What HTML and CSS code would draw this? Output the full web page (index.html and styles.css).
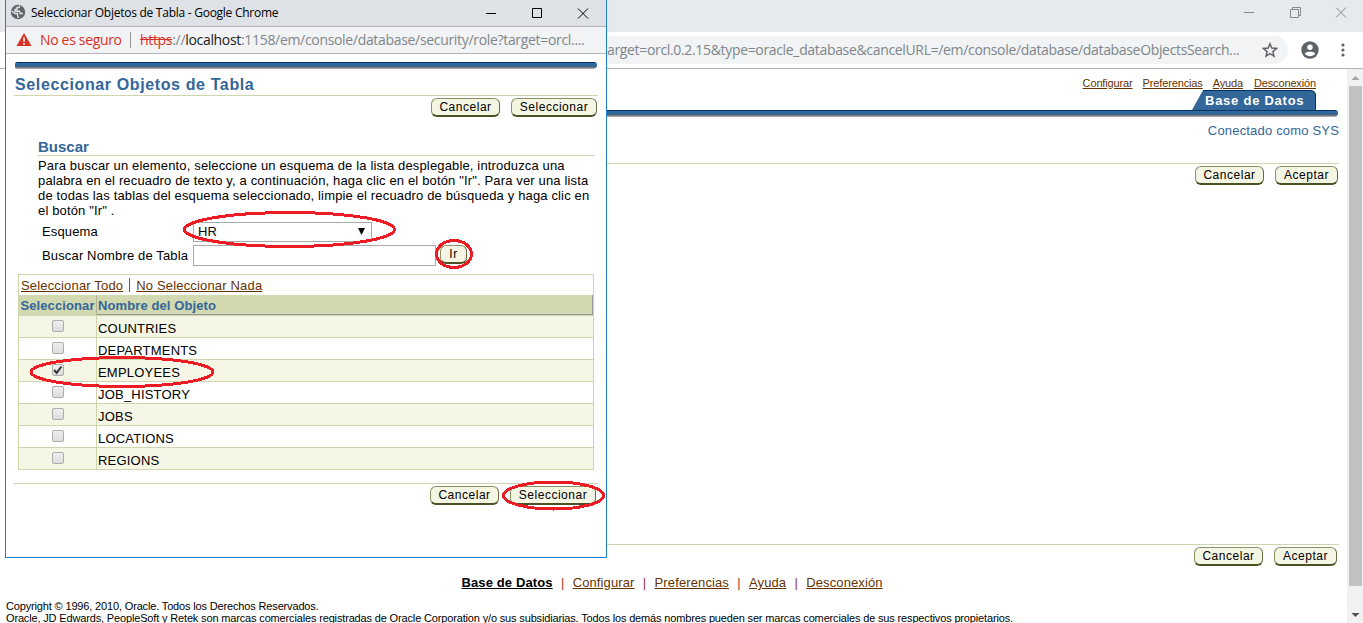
FILE: index.html
```html
<!DOCTYPE html>
<html lang="es">
<head>
<meta charset="utf-8">
<title>Seleccionar Objetos de Tabla</title>
<link rel="stylesheet" href="styles.css">
</head>
<body>
<div class="browser">
  <div class="main-title">
    <svg width="115" height="32" viewBox="0 0 115 32" fill="none" stroke="#868a8d"><path d="M1 12.500h10M47.500 9.500h8v8h-8zM49.500 9.500v-2h8v8h-2M93 7.500l10 10M103 7.500l-10 10"/></svg>
  </div>
  <div class="main-toolbar">
    <div class="omnibox"><span class="main-url">arget=orcl.0.2.15&amp;type=oracle_database&amp;cancelURL=/em/console/database/databaseObjectsSearch...</span>
      <svg class="star" width="16" height="16" viewBox="0 0 16 16" fill="none" stroke="#5f6368" stroke-width="1.500"><path d="M8 1.800l1.800 4.300 4.700.4-3.600 3.100 1.100 4.600L8 11.700l-4 2.500 1.100-4.600-3.600-3.100 4.700-.4z"/></svg>
    </div>
    <svg class="avatar" width="18" height="18" viewBox="0 0 18 18"><circle cx="9" cy="9" r="8.700" fill="#5f6368"/><circle cx="9" cy="6.200" r="2.700" fill="#fff"/><path d="M3.700 12.500c1-2.300 9.600-2.300 10.600 0-2.400 3.700-8.200 3.700-10.600 0z" fill="#fff"/></svg>
    <svg class="dots" width="4" height="14" viewBox="0 0 4 14" fill="#5f6368"><circle cx="2" cy="2" r="1.600"/><circle cx="2" cy="7" r="1.600"/><circle cx="2" cy="12" r="1.600"/></svg>
  </div>
  <div class="viewport">
    <div class="page">
      <nav class="top-links"><a>Configurar</a><a>Preferencias</a><a>Ayuda</a><a class="w-desc">Desconexión</a></nav>
      <div class="tab-row"><div class="tab"><svg width="125" height="20" viewBox="0 0 125 20"><path d="M0 20L10 2Q11 0 13 0H118Q124 0 124 6V20z" fill="#369"/><path d="M11 .5H117Q123.500 .5 123.500 6V20" fill="none" stroke="#003366"/></svg><span>Base de Datos</span></div></div>
      <div class="bar"></div>
      <div class="connected">Conectado como SYS</div>
      <div class="rule"></div>
      <div class="actions top"><button>Cancelar</button><button class="accept">Aceptar</button></div>
      <div class="grow"></div>
      <div class="rule"></div>
      <div class="actions bottom"><button>Cancelar</button><button class="accept">Aceptar</button></div>
      <nav class="foot-links"><a class="current">Base de Datos</a><i>|</i><a>Configurar</a><i>|</i><a>Preferencias</a><i>|</i><a>Ayuda</a><i>|</i><a>Desconexión</a></nav>
      <div class="copyright"><div>Copyright © 1996, 2010, Oracle. Todos los Derechos Reservados.</div><div>Oracle, JD Edwards, PeopleSoft y Retek son marcas comerciales registradas de Oracle Corporation y/o sus subsidiarias. Todos los demás nombres pueden ser marcas comerciales de sus respectivos propietarios.</div></div>
    </div>
    <div class="scrollbar"><svg width="16" height="17" viewBox="0 0 16 17"><path d="M4.500 11l4-4 4 4z" fill="#a3a3a3"/></svg><div class="thumb"></div><svg width="16" height="37" viewBox="0 0 16 37"><path d="M4.500 27h8l-4 4z" fill="#505050"/></svg></div>
  </div>
</div>

<section class="popup">
  <header class="pop-title">
    <svg class="globe" width="16" height="16" viewBox="0 0 16 16"><circle cx="8" cy="8" r="7.200" fill="#5f6368"/><path d="M1.500 7l3.500 2.500h2.500v1.500L8.500 14M10 1.500L9 3.500H7v2H5v1.800h4.500l.8 2.200H13" fill="none" stroke="#dee1e6" stroke-width="1.400"/></svg>
    <span>Seleccionar Objetos de Tabla - Google Chrome</span>
    <svg class="controls" width="106" height="20" viewBox="0 0 106 20" fill="none" stroke="#000"><path d="M1 10.500h10M47.500 5.500h9v9h-9zM93 5.500l10 10M103 5.500l-10 10"/></svg>
  </header>
  <div class="pop-address">
    <svg width="16" height="14" viewBox="0 0 16 14"><path d="M8 0l7.500 13H.5z" fill="#d93025"/><path d="M8 4.500v4.200M8 10v1.700" stroke="#fff" stroke-width="1.600"/></svg>
    <span class="unsafe">No es seguro</span><span class="pipe"></span>
    <span class="pop-url"><s>https</s>://<b>localhost</b>:1158/em/console/database/security/role?target=orcl....</span>
  </div>
  <main class="pop-body">
    <div class="bar"></div>
    <h1>Seleccionar Objetos de Tabla</h1>
    <div class="rule"></div>
    <div class="actions"><button>Cancelar</button><button class="select">Seleccionar</button></div>
    <div class="search">
      <h2>Buscar</h2>
      <div class="rule"></div>
      <p>Para buscar un elemento, seleccione un esquema de la lista desplegable, introduzca una<br>palabra en el recuadro de texto y, a continuación, haga clic en el botón "Ir". Para ver una lista<br>de todas las tablas del esquema seleccionado, limpie el recuadro de búsqueda y haga clic en<br>el botón "Ir" .</p>
      <div class="field"><label>Esquema</label><div class="dropdown">HR<svg width="7" height="7" viewBox="0 0 7 7"><path d="M0 0h7L3.500 7z"/></svg></div></div>
      <div class="field second"><label>Buscar Nombre de Tabla</label><div class="text-input"></div><button class="go">Ir</button></div>
    </div>
    <div class="list">
      <div class="list-tools"><a>Seleccionar Todo</a><i></i><a>No Seleccionar Nada</a></div>
      <div class="row head"><div>Seleccionar</div><div>Nombre del Objeto</div></div>
      <div class="row odd"><div><span class="check"></span></div><div>COUNTRIES</div></div>
      <div class="row"><div><span class="check"></span></div><div>DEPARTMENTS</div></div>
      <div class="row odd"><div><span class="check"><svg width="10" height="10" viewBox="0 0 10 10"><path d="M1.200 5l2.400 2.800L8.500 1.500" fill="none" stroke="#333" stroke-width="2"/></svg></span></div><div>EMPLOYEES</div></div>
      <div class="row"><div><span class="check"></span></div><div>JOB_HISTORY</div></div>
      <div class="row odd"><div><span class="check"></span></div><div>JOBS</div></div>
      <div class="row"><div><span class="check"></span></div><div>LOCATIONS</div></div>
      <div class="row odd"><div><span class="check"></span></div><div>REGIONS</div></div>
    </div>
    <div class="rule end"></div>
    <div class="actions last"><button>Cancelar</button><button class="select">Seleccionar</button></div>
  </main>
</section>

<svg class="marks" width="620" height="520" viewBox="0 0 620 520" fill="none" stroke="#ed1c24" stroke-width="3" shape-rendering="crispEdges">
  <ellipse cx="289.500" cy="229.500" rx="105" ry="17"/><ellipse cx="454" cy="254" rx="17.500" ry="13.500"/><ellipse cx="122" cy="372" rx="91" ry="14.500"/><ellipse cx="553.500" cy="495.500" rx="50" ry="13.500"/>
</svg>
</body>
</html>
```
FILE: styles.css
```css
* { box-sizing: border-box; }
body { margin: 0; width: 1363px; height: 623px; overflow: hidden; position: relative; background: #fff; color: #000; font: 13px/15px "Liberation Sans", Arial, sans-serif; }
svg { display: block; flex: none; }
h1, h2, p { margin: 0; }
i { font-style: normal; }
a { text-decoration: underline; color: #663300; white-space: nowrap; }
span { white-space: nowrap; }

.browser { display: flex; flex-direction: column; height: 623px; }
.main-title { height: 32px; flex: none; background: #e7eaed; display: flex; justify-content: flex-end; padding-right: 5px; }
.main-toolbar { height: 37px; flex: none; border-bottom: 1px solid #b1b3b5; display: flex; align-items: center; }
.omnibox { width: 1268px; height: 28px; margin-left: 20px; padding-left: 587px; border-radius: 14px; background: #f1f3f4; display: flex; align-items: center; }
.main-url { width: 655px; font: 14px/20px "Open Sans", sans-serif; letter-spacing: -.335px; color: #80868b; }
.avatar { margin-left: 13px; }
.dots { margin-left: 22px; }
.viewport { flex: 1; display: flex; min-height: 0; }
.page { width: 1347px; height: 554px; display: flex; flex-direction: column; padding-right: 8px; }
.top-links { display: flex; justify-content: flex-end; gap: 10px; padding: 8px 23px 0 0; height: 21px; font-size: 11px; line-height: 13px; letter-spacing: -.14px; }
.w-desc { margin-left: 1px; }
.tab-row { display: flex; justify-content: flex-end; height: 20px; padding-right: 22px; }
.tab { display: grid; width: 125px; }
.tab svg, .tab span { grid-area: 1 / 1; }
.tab span { color: #fff; font-weight: bold; font-size: 13px; line-height: 21px; letter-spacing: .75px; padding-left: 13px; z-index: 1; }
.bar { height: 7px; flex: none; background: linear-gradient(#003366 1px, #336699 1px 5px, #777 5px 6px, #aaa 6px); border-radius: 2px 3px 4px 2px; }
.page > .bar { margin: 0 1px 0 15px; }
.connected { text-align: right; color: #336699; padding-top: 6px; height: 46px; flex: none; letter-spacing: .18px; }
.rule { height: 1px; flex: none; background: #cfd5ac; }
.page > .rule { margin-left: 15px; }
.actions { display: flex; justify-content: flex-end; gap: 11px; flex: none; }
.actions.top { padding: 2px 1px 0 0; }
.actions.bottom { padding: 2px 2px 0 0; height: 30px; }
.grow { height: 359px; flex: none; }
button { width: 69px; height: 19px; padding: 0; border: 1px solid #8a9165; border-right-color: #656b43; border-bottom: 2px solid #4a5127; border-radius: 6px; background: #f5f5e4; color: #000; font: 12px/16px "Liberation Sans", Arial, sans-serif; letter-spacing: .52px; }
button.accept { width: 63px; }
button.select { width: 86px; }
button.go { width: 27px; margin-left: 4px; }
.foot-links { display: flex; padding-left: 461.5px; height: 25px; flex: none; letter-spacing: .12px; white-space: pre; }
.foot-links i { color: #993333; width: 20px; text-align: center; }
.foot-links .current { color: #000; font-weight: bold; }
.copyright { padding-left: 6px; font-size: 11px; line-height: 12px; white-space: nowrap; letter-spacing: -.155px; }
.scrollbar { width: 16px; background: #f1f1f1; display: flex; flex-direction: column; }
.thumb { width: 13px; height: 500px; flex: none; margin-left: 2px; background: #c1c1c1; }

.popup { position: absolute; left: 5px; top: 0; width: 602px; height: 558px; border: 1px solid #1c7fd0; border-top: 0; background: #fff; }
.pop-title { height: 27px; display: flex; background: #dee1e6; border-bottom: 1px solid #b1b3b5; font: 12px/26px "Open Sans", sans-serif; padding-left: 4px; }
.pop-title span { padding-left: 5px; letter-spacing: -.26px; flex: 1; }
.globe { margin-top: 4px; }
.controls { margin: 3px 15px 0 0; }
.pop-address { height: 27px; display: flex; align-items: center; background: #f2f3f5; border-bottom: 1px solid #b1b3b5; padding-left: 10px; font: 14px/24px "Open Sans", sans-serif; }
.unsafe { color: #d93025; width: 89px; padding-left: 8px; letter-spacing: -.33px; }
.pipe { width: 1px; height: 16px; background: #999; margin: 0 9px; }
.pop-url { color: #80868b; letter-spacing: -.32px; }
.pop-url s { color: #d93025; }
.pop-url b { font-weight: normal; color: #202124; }
.pop-body { padding: 8px 8px 0; display: flex; flex-direction: column; }
.pop-body > .bar { margin: 0 1px; }
h1 { color: #336699; font-size: 16px; line-height: 18px; padding: 7px 1px 0; height: 26px; letter-spacing: .62px; white-space: nowrap; }
.pop-body > .actions { padding: 2px 1px 0 0; }
.search { padding: 21px 4px 0 24px; height: 157px; letter-spacing: .15px; }
h2 { color: #336699; font-size: 15px; line-height: 18px; height: 17px; letter-spacing: 0; }
.search p { padding-top: 2px; height: 65px; white-space: nowrap; }
.field { display: flex; padding-left: 4px; height: 23px; }
.field label { width: 151px; line-height: 21px; white-space: nowrap; flex: none; }
.dropdown { width: 179px; height: 20px; border: 1px solid #a9a9a9; display: flex; justify-content: space-between; align-items: center; padding: 0 6px 1px 4px; margin-top: 1px; line-height: 17px; }
.second { padding-top: 1px; height: 24px; }
.text-input { width: 243px; height: 21px; border: 1px solid #a9a9a9; }
.list { margin: 0 4px; border: 1px solid #cfd5ac; border-bottom: 0; width: 576px; }
.list-tools { height: 20px; display: flex; line-height: 21px; padding-left: 2px; letter-spacing: .17px; }
.list-tools i { width: 1px; height: 14px; margin: 3px 6px 0; background: #336699; }
.row { display: grid; grid-template: 21px / 78px 1fr; height: 22px; border-bottom: 1px solid #cfd5ac; letter-spacing: .2px; }
.row > div:first-child { border-right: 1px solid #cfd5ac; display: flex; justify-content: center; }
.row > div:last-child { padding-left: 1px; line-height: 25px; }
.odd { background: #f5f6e6; }
.row.head { grid-template-rows: 20px; height: 21px; background: #d2d8b0; color: #336699; font-weight: bold; letter-spacing: .1px; }
.row.head > div:first-child { border-right: 1px solid #b0b590; line-height: 22px; }
.row.head > div:last-child { line-height: 21px; border-right: 1px solid #999; border-bottom: 1px solid #999; }
.check { width: 12px; height: 12px; margin: 4px 0 0 1px; border: 1px solid #adadad; border-radius: 2px; background: linear-gradient(#eee, #ddd); }
.end { margin-top: 13px; }
.pop-body > .last { padding: 2px 2px 0 0; }
.marks { position: absolute; left: 0; top: 0; pointer-events: none; }
```
